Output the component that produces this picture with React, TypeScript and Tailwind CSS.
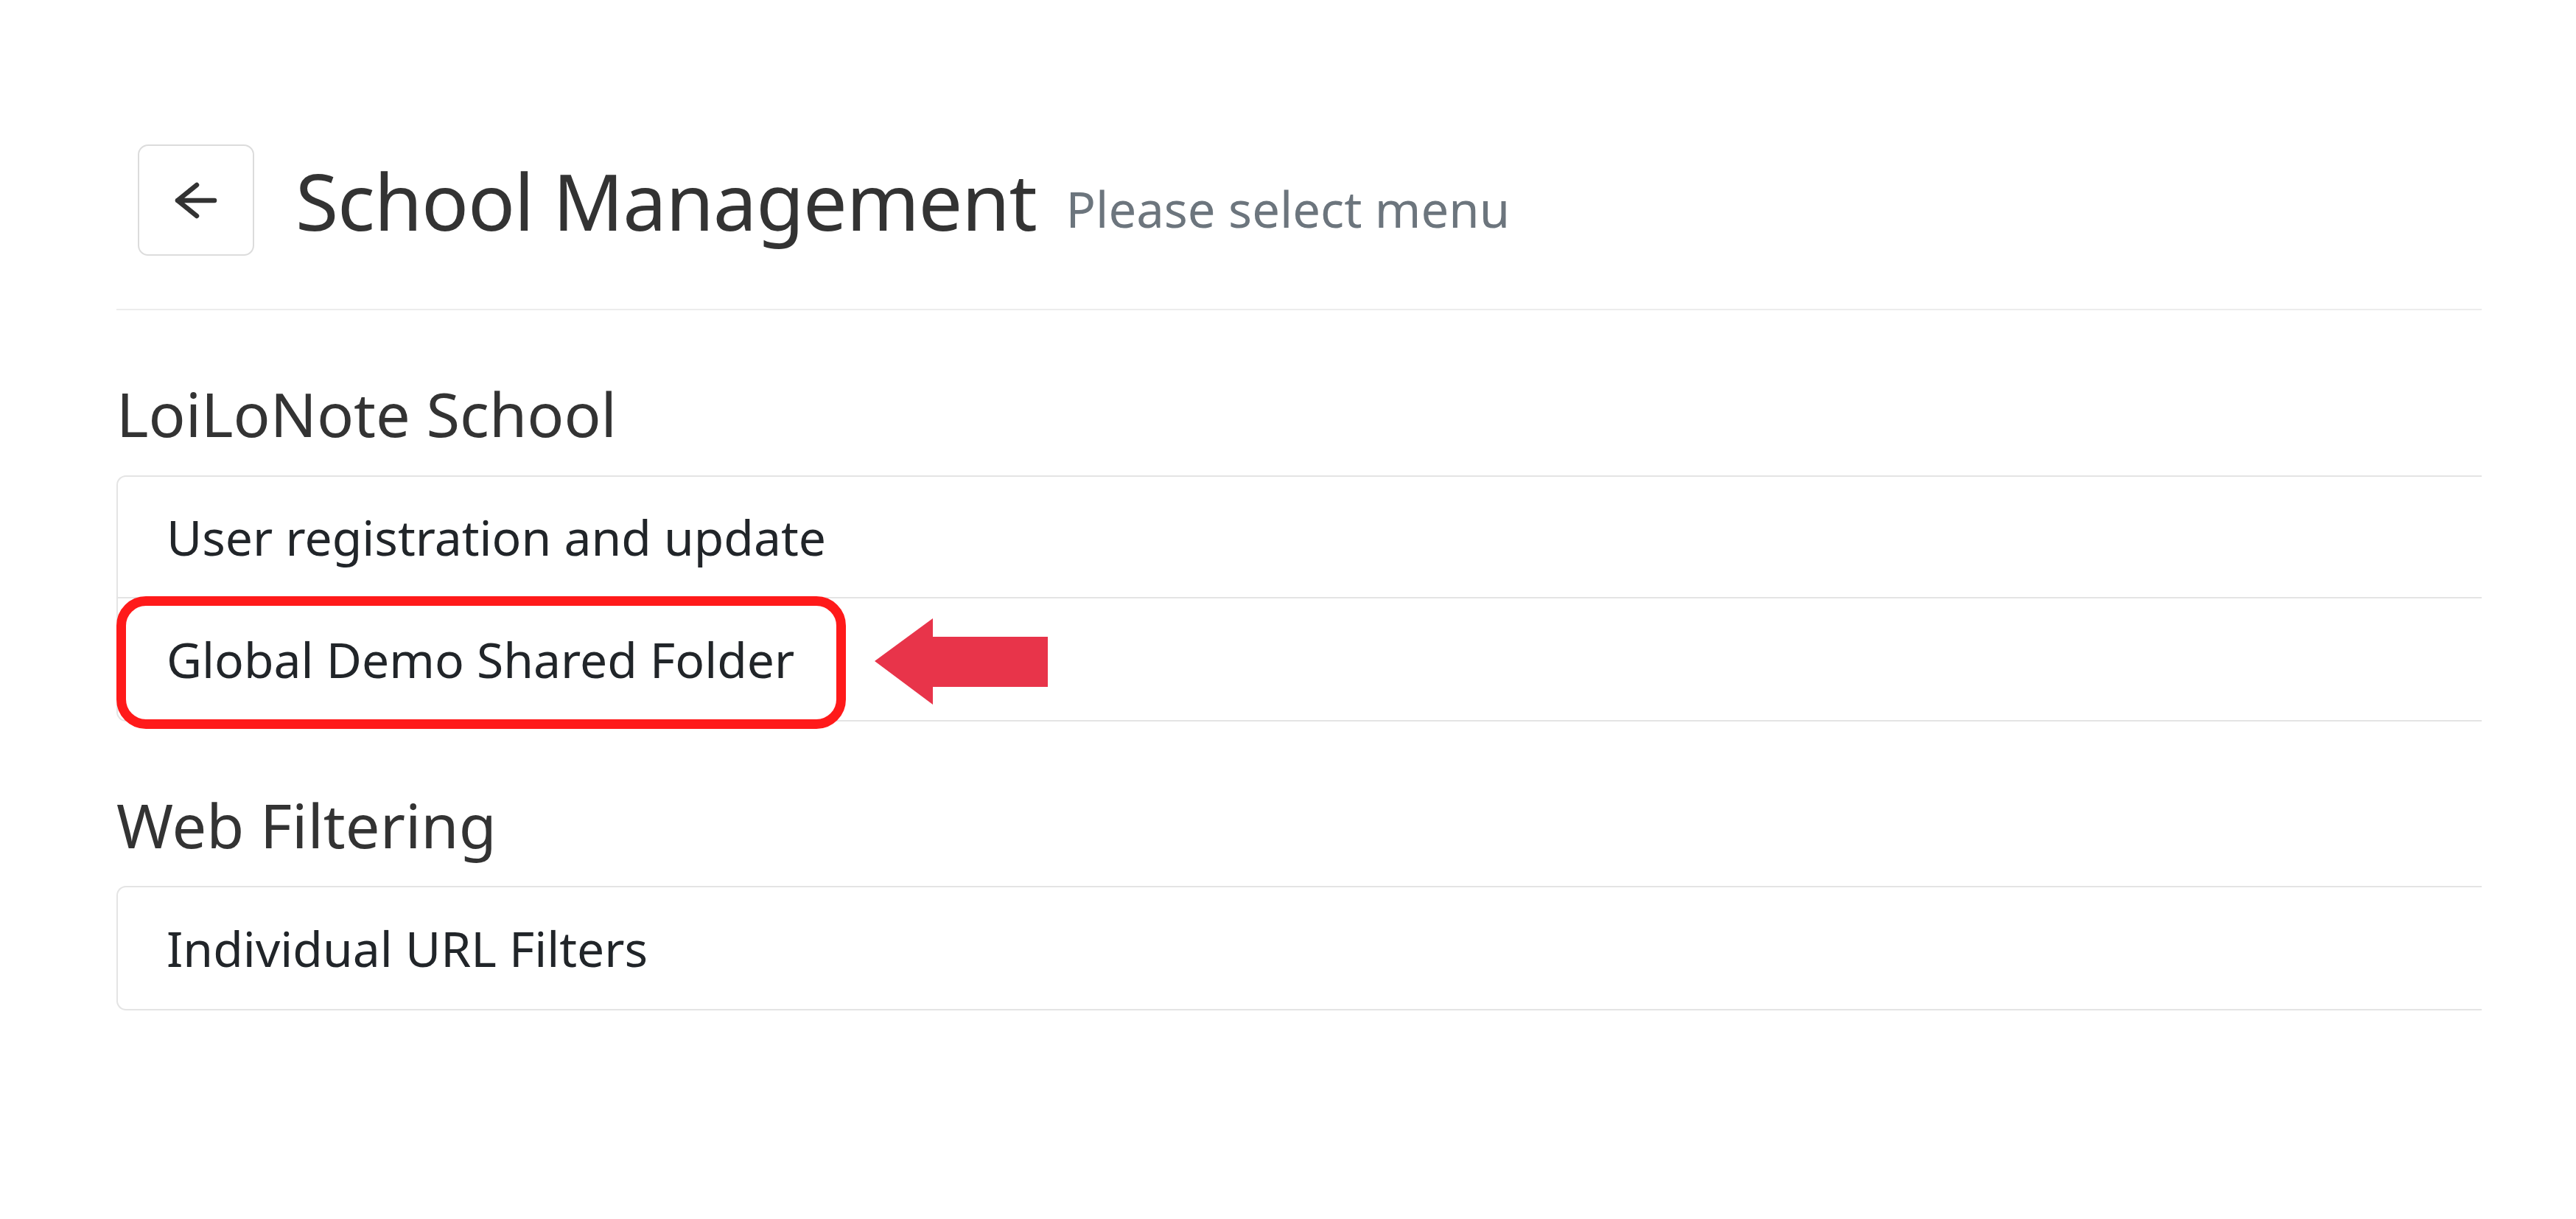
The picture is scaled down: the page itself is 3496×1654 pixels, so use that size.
import { ReactNode } from "react";

const font = { fontFamily: '"Noto Sans", "Open Sans", sans-serif' };

function BackArrow() {
  return (
    <svg width="58" height="50" viewBox="0 0 58 50" fill="none">
      <path
        d="M4 25H54M30 4L4 25L30 46"
        stroke="#333333"
        strokeWidth="6.5"
        strokeLinecap="round"
        strokeLinejoin="round"
      />
    </svg>
  );
}

function ListItem({ children, last }: { children: ReactNode; last?: boolean }) {
  return (
    <div
      className={`h-[165px] flex items-center pl-[66px] text-[66px] text-[#212529] ${last ? "" : "border-b-2 border-[#e4e4e4]"}`}
    >
      {children}
    </div>
  );
}

export default function App() {
  return (
    <div className="min-h-screen bg-white" style={font}>
      <div className="ml-[158px] w-[3210px] pt-[196px]">
        {/* ヘッダー */}
        <div className="flex items-center pl-[29px] pb-[72px] border-b-2 border-[#ececec]">
          <button className="w-[158px] h-[151px] rounded-[14px] border-2 border-[#dcdcdc] bg-white flex items-center justify-center">
            <BackArrow />
          </button>
          <h1 className="ml-[56px] text-[106px] leading-none tracking-[-1.2px] text-[#333333]">School Management</h1>
          <span className="ml-[40px] text-[67px] text-[#6c757d] self-end mb-[14px]">Please select menu</span>
        </div>

        {/* LoiLoNote School */}
        <h2 className="mt-[90px] text-[83px] leading-[100px] text-[#333333]">LoiLoNote School</h2>
        <div className="relative mt-[34px]">
          <div className="border-2 border-r-0 border-[#e4e4e4] rounded-l-[13px]">
            <ListItem>User registration and update</ListItem>
            <ListItem last>Global Demo Shared Folder</ListItem>
          </div>
          {/* 注釈 */}
          <div className="absolute left-0 top-[164px] w-[990px] h-[180px] border-[13px] border-[#ff1a1a] rounded-[40px]" />
          <svg className="absolute left-[1028px] top-[194px]" width="236" height="119" viewBox="0 0 236 119">
            <polygon points="1,58 80,0 80,25 236,25 236,93 80,93 80,117" fill="#e8344a" />
          </svg>
        </div>

        {/* Web Filtering */}
        <h2 className="mt-[90px] text-[83px] leading-[100px] text-[#333333]">Web Filtering</h2>
        <div className="mt-[33px] border-2 border-r-0 border-[#e4e4e4] rounded-l-[13px]">
          <ListItem last>Individual URL Filters</ListItem>
        </div>
      </div>
    </div>
  );
}
